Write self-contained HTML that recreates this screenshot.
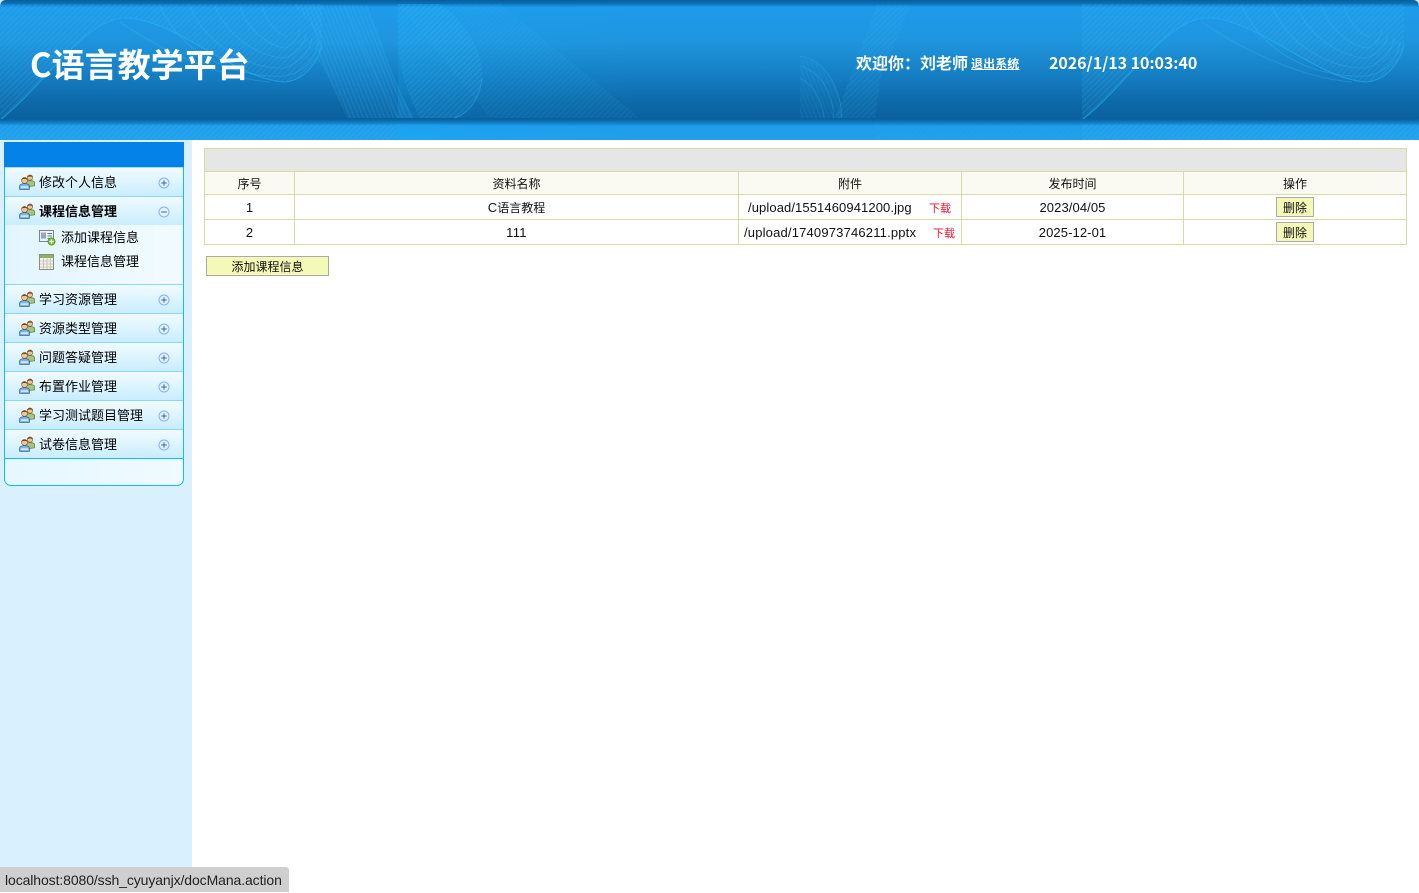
<!DOCTYPE html>
<html lang="zh-CN">
<head>
<meta charset="utf-8">
<title>C语言教学平台</title>
<style>
*{box-sizing:border-box}
html,body{margin:0;padding:0;width:1419px;height:892px;overflow:hidden;background:#fff;font-family:"Liberation Sans","Noto Sans CJK SC",sans-serif;color:#000}
.a{position:absolute}
.t{position:absolute;white-space:nowrap;font-size:13px;line-height:18px}
.hb{font-family:"Noto Sans CJK SC",sans-serif;font-weight:700;color:#fff}
.item{position:absolute;left:5px;width:178px;height:28px;background:linear-gradient(#f1fbff,#c9edff)}
.line{position:absolute;left:5px;width:178px;height:1px;background:#8bd8fb}
.lbl{position:absolute;left:39px;font-size:13px;line-height:18px;white-space:nowrap;color:#000;font-family:"Noto Sans CJK SC",sans-serif}
.cell{position:absolute;font-size:13px;line-height:18px;text-align:center;white-space:nowrap;color:#111}
.h{position:absolute;background:#d5dca6}
.btn{position:absolute;left:1276px;width:38px;height:20px;background:#f4f9b8;border:1px solid #aaa;font-size:12px;line-height:19px;text-align:center;font-family:"Noto Sans CJK SC",sans-serif;color:#111}
</style>
</head>
<body>

<svg class="a" style="left:0;top:0" width="1419" height="140" viewBox="0 0 1419 140">
<defs>
<linearGradient id="bg" x1="0" y1="0" x2="0" y2="1">
<stop offset="0" stop-color="#075d9d"/>
<stop offset=".03" stop-color="#0b70b5"/>
<stop offset=".06" stop-color="#1e9bea"/>
<stop offset=".35" stop-color="#1f95dd"/>
<stop offset=".65" stop-color="#147cc0"/>
<stop offset=".85" stop-color="#0e69a8"/>
<stop offset="1" stop-color="#0a609c"/>
</linearGradient>
<linearGradient id="bot" x1="0" y1="0" x2="0" y2="1">
<stop offset="0" stop-color="#0a5f9c"/>
<stop offset=".15" stop-color="#0f78bc"/>
<stop offset=".35" stop-color="#1f9ceb"/>
<stop offset="1" stop-color="#219fec"/>
</linearGradient>
<linearGradient id="fade" x1="0" y1="0" x2="1" y2="0">
<stop offset="0" stop-color="#16b2fb" stop-opacity=".55"/>
<stop offset=".35" stop-color="#16b2fb" stop-opacity=".22"/>
<stop offset="1" stop-color="#16b2fb" stop-opacity="0"/>
</linearGradient>
<linearGradient id="vfade" x1="0" y1="0" x2="0" y2="1">
<stop offset="0" stop-color="#fff" stop-opacity="1"/>
<stop offset=".7" stop-color="#fff" stop-opacity=".75"/>
<stop offset="1" stop-color="#fff" stop-opacity=".35"/>
</linearGradient>
<pattern id="hatch" width="4" height="4" patternUnits="userSpaceOnUse" patternTransform="rotate(45)">
<rect width="4" height="4" fill="#2fb4f8" fill-opacity=".09"/>
<rect width="1.5" height="4" fill="#4cc4ff" fill-opacity=".13"/>
</pattern>
<pattern id="hatch2" width="4" height="4" patternUnits="userSpaceOnUse" patternTransform="rotate(-22)">
<rect width="4" height="4" fill="#28b0f8" fill-opacity=".12"/>
<rect width="1.5" height="4" fill="#50c8ff" fill-opacity=".12"/>
</pattern>
<g id="tile" fill="none">
<path d="M0 120 C45 85 85 18 125 18 C175 18 235 80 285 82 C305 80 318 62 322 45 L322 4 L0 4Z" fill="url(#hatch)"/>
<path d="M0 120 C45 85 85 18 125 18 C175 18 235 80 285 82 C305 80 318 62 322 45" stroke="#22b6fa" stroke-width="1.1" stroke-opacity=".55"/>
<path d="M160 6 C185 60 240 78 285 76 C305 72 316 58 318 42 M190 6 C205 45 250 70 285 68 C300 62 310 52 312 38 M215 6 C225 35 260 58 285 58 C296 54 304 46 306 34 M240 6 C246 28 268 46 285 48 C294 45 298 38 300 30 M262 6 C266 20 276 34 288 37 M120 22 C160 50 220 78 270 82" stroke="#3fc0fd" stroke-opacity=".28"/>
</g>
<g id="mid" fill="none">
<rect x="398" y="4" width="240" height="114" fill="url(#fade)" opacity=".35"/>
<path d="M293 5 L367 5 C385 55 395 85 413 118 L347 118 C335 90 325 70 318 60 C322 40 310 20 293 5Z" fill="url(#hatch2)"/>
<path d="M398 4 L440 4 C470 25 483 55 482 78 C480 98 470 112 455 118 L420 118 C405 90 395 60 398 4Z" fill="url(#hatch)"/>
<path d="M482 78 C480 98 470 112 455 118" stroke="#22aef5" stroke-opacity=".5"/>
<path d="M367 5 C385 55 395 85 413 118 M345 5 C365 55 380 85 398 118" stroke="#2fb8fb" stroke-opacity=".2"/>
<path d="M398 4 H500 L640 118 H490Z" fill="url(#hatch)" fill-opacity=".5"/>
<path d="M835 118 L877 5 L910 5 L880 80 L875 118Z" fill="url(#hatch)" fill-opacity=".7"/>
<path d="M800 118 H842 C842 90 830 65 800 56Z" fill="url(#hatch2)" fill-opacity=".5"/>
<path d="M800 56 C825 60 840 85 842 118 M800 66 C820 72 832 90 834 118 M800 78 C812 84 822 98 824 118" stroke="#40bffc" stroke-opacity=".22"/>
</g>
<clipPath id="upper"><rect x="0" y="0" width="1419" height="119"/></clipPath>
<clipPath id="lower"><rect x="0" y="124" width="1419" height="16"/></clipPath>
<clipPath id="leftc"><rect x="0" y="0" width="398" height="140"/></clipPath>
<clipPath id="rightc"><rect x="1082" y="0" width="337" height="140"/></clipPath>
</defs>
<rect width="1419" height="140" fill="#219fec"/>
<rect y="0" width="1419" height="120" fill="url(#bg)"/>
<rect y="119" width="1419" height="21" fill="url(#bot)"/>
<g clip-path="url(#upper)">
  <g clip-path="url(#leftc)"><use href="#tile"/></g>
  <use href="#mid"/>
  <g clip-path="url(#rightc)"><use href="#tile" x="1082"/></g>
</g>
<g clip-path="url(#lower)">
  <rect y="124" width="398" height="16" fill="url(#hatch)"/>
  <rect x="398" y="124" width="240" height="16" fill="url(#fade)" opacity=".6"/>
  <rect x="1082" y="124" width="337" height="16" fill="url(#hatch)"/>
  <rect x="875" y="124" width="207" height="16" fill="url(#hatch)" fill-opacity=".4"/>
</g>
<path d="M0 0H6C2 0 0 3 0 7Z" fill="#d7e8f2"/>
<path d="M1419 0H1413C1417 0 1419 3 1419 7Z" fill="#d7e8f2"/>
</svg>

<div class="t hb" style="left:30px;top:39px;font-size:33px;line-height:48px;">C语言教学平台</div>
<div class="t hb" style="left:856px;top:50px;font-size:16px;line-height:24px;">欢迎你：刘老师</div>
<div class="t hb" style="left:971px;top:55px;font-size:12px;line-height:18px;text-decoration:underline;letter-spacing:.1px">退出系统</div>
<div class="t hb" style="left:1049px;top:50px;font-size:16px;line-height:24px;letter-spacing:-.05px">2026/1/13 10:03:40</div>

<!-- sidebar -->
<div class="a" style="left:0;top:140px;width:192px;height:752px;background:#d9f1ff"></div>
<div class="a" style="left:4px;top:142px;width:180px;height:344px;background:linear-gradient(90deg,#e6f7ff,#f0faff);border:1px solid #12bdf5;border-top:0;border-radius:0 0 7px 7px"></div>
<div class="a" style="left:4px;top:142px;width:180px;height:25px;background:#0582e8"></div>

<svg width="0" height="0" style="position:absolute">
<defs>
<g id="ppl">
<circle cx="11" cy="3.6" r="2.7" fill="#ecc79a" stroke="#8a5a2a" stroke-width=".6"/>
<path d="M8.2 3.2C8.4 .5 13.6 .5 13.8 3.2 12 2.2 10 2.2 8.2 3.2Z" fill="#7a4a1c"/>
<path d="M7 12.5V9C7 7 9 6.6 11 6.6S15.7 7 15.7 9V11.8L10 12.5Z" fill="#a9c47c" stroke="#5b7d33" stroke-width=".7"/>
<circle cx="5.5" cy="6.4" r="3" fill="#efc79b" stroke="#8a5a2a" stroke-width=".6"/>
<path d="M2.3 6C2.5 2.8 8.5 2.8 8.7 6 6.6 4.7 4.4 4.7 2.3 6Z" fill="#7a4a1c"/>
<path d="M.6 15.4V12.3C.6 10.3 3 9.7 5.5 9.7S10.4 10.3 10.4 12.3V15.4Z" fill="#7db4e6" stroke="#2b5f9c" stroke-width=".7"/>
<rect x="2" y="12.4" width="7" height="1.4" fill="#e8f4ff"/>
</g>
<g id="plus">
<circle cx="6" cy="6" r="5" fill="#e4f2ff" stroke="#82b4ee" stroke-width="1"/>
<path d="M3.2 6H8.8M6 3.2V8.8" stroke="#2f66c0" stroke-width="1" fill="none"/>
</g>
<g id="minus">
<circle cx="6" cy="6" r="5" fill="#e4f2ff" stroke="#82b4ee" stroke-width="1"/>
<path d="M3.2 6H8.8" stroke="#2f66c0" stroke-width="1" fill="none"/>
</g>
</defs>
</svg>

<!-- menu rows -->
<div class="line" style="top:167px;background:#9be0fb"></div>
<div class="item" style="top:168px"></div>
<div class="line" style="top:196px"></div>
<div class="item" style="top:197px"></div>
<div class="a" style="left:5px;top:225px;width:178px;height:59px;background:linear-gradient(90deg,#e2f5ff,#f2fbff)"></div>
<div class="line" style="top:284px"></div>
<div class="item" style="top:285px"></div>
<div class="line" style="top:313px"></div>
<div class="item" style="top:314px"></div>
<div class="line" style="top:342px"></div>
<div class="item" style="top:343px"></div>
<div class="line" style="top:371px"></div>
<div class="item" style="top:372px"></div>
<div class="line" style="top:400px"></div>
<div class="item" style="top:401px"></div>
<div class="line" style="top:429px"></div>
<div class="item" style="top:430px"></div>
<div class="line" style="top:458px;background:#0dbdf5"></div>

<svg class="a" style="left:19px;top:174px" width="16" height="16"><use href="#ppl"/></svg>
<svg class="a" style="left:19px;top:203px" width="16" height="16"><use href="#ppl"/></svg>
<svg class="a" style="left:19px;top:291px" width="16" height="16"><use href="#ppl"/></svg>
<svg class="a" style="left:19px;top:320px" width="16" height="16"><use href="#ppl"/></svg>
<svg class="a" style="left:19px;top:349px" width="16" height="16"><use href="#ppl"/></svg>
<svg class="a" style="left:19px;top:378px" width="16" height="16"><use href="#ppl"/></svg>
<svg class="a" style="left:19px;top:407px" width="16" height="16"><use href="#ppl"/></svg>
<svg class="a" style="left:19px;top:436px" width="16" height="16"><use href="#ppl"/></svg>

<svg class="a" style="left:157.5px;top:176.5px" width="12" height="12"><use href="#plus"/></svg>
<svg class="a" style="left:157.5px;top:205.5px" width="12" height="12"><use href="#minus"/></svg>
<svg class="a" style="left:157.5px;top:293.5px" width="12" height="12"><use href="#plus"/></svg>
<svg class="a" style="left:157.5px;top:322.5px" width="12" height="12"><use href="#plus"/></svg>
<svg class="a" style="left:157.5px;top:351.5px" width="12" height="12"><use href="#plus"/></svg>
<svg class="a" style="left:157.5px;top:380.5px" width="12" height="12"><use href="#plus"/></svg>
<svg class="a" style="left:157.5px;top:409.5px" width="12" height="12"><use href="#plus"/></svg>
<svg class="a" style="left:157.5px;top:438.5px" width="12" height="12"><use href="#plus"/></svg>

<div class="lbl" style="top:173px">修改个人信息</div>
<div class="lbl" style="top:202px;font-weight:700">课程信息管理</div>
<div class="lbl" style="top:290px">学习资源管理</div>
<div class="lbl" style="top:319px">资源类型管理</div>
<div class="lbl" style="top:348px">问题答疑管理</div>
<div class="lbl" style="top:377px">布置作业管理</div>
<div class="lbl" style="top:406px">学习测试题目管理</div>
<div class="lbl" style="top:435px">试卷信息管理</div>
<div class="lbl" style="top:228px;left:61px">添加课程信息</div>
<div class="lbl" style="top:252px;left:61px">课程信息管理</div>

<svg class="a" style="left:39px;top:230px" width="17" height="16" viewBox="0 0 17 16">
<rect x=".5" y=".5" width="14" height="11" fill="#eef4fb" stroke="#6c87a8"/>
<rect x="2" y="2.5" width="5" height="6" fill="#7ea6d8"/>
<circle cx="4.5" cy="4" r="1.5" fill="#d9a46f"/>
<path d="M8.5 3.5H13M8.5 6H13M8.5 8.5H11" stroke="#5b6f8a"/>
<circle cx="12.5" cy="11.5" r="3.6" fill="#7cc234" stroke="#3f8a16" stroke-width=".7"/>
<path d="M10.5 11.5H14.5M12.5 9.5V13.5" stroke="#fff" stroke-width="1.2"/>
</svg>
<svg class="a" style="left:39px;top:254px" width="15" height="16" viewBox="0 0 15 16">
<rect x=".5" y=".5" width="14" height="15" fill="#f6f4ec" stroke="#8a8f78"/>
<rect x="1" y="1" width="13" height="3" fill="#8fb06a"/>
<path d="M1 7H14M1 10H14M1 13H14M4.5 4V15M8 4V15M11.5 4V15" stroke="#c8c8ba" fill="none"/>
</svg>

<!-- table -->
<div class="a" style="left:205px;top:149px;width:1201px;height:22px;background:#e6e6e6"></div>
<div class="a" style="left:205px;top:172px;width:1201px;height:22px;background:#fafaf2"></div>
<div class="h" style="left:204px;top:148px;width:1203px;height:1px"></div>
<div class="h" style="left:204px;top:171px;width:1203px;height:1px"></div>
<div class="h" style="left:204px;top:194px;width:1203px;height:1px"></div>
<div class="h" style="left:204px;top:219px;width:1203px;height:1px"></div>
<div class="h" style="left:204px;top:244px;width:1203px;height:1px"></div>
<div class="h" style="left:204px;top:148px;width:1px;height:97px"></div>
<div class="h" style="left:1406px;top:148px;width:1px;height:97px"></div>
<div class="h" style="left:294px;top:171px;width:1px;height:74px"></div>
<div class="h" style="left:738px;top:171px;width:1px;height:74px"></div>
<div class="h" style="left:961px;top:171px;width:1px;height:74px"></div>
<div class="h" style="left:1183px;top:171px;width:1px;height:74px"></div>

<div class="cell" style="left:205px;width:89px;top:175px;font-size:12px">序号</div>
<div class="cell" style="left:295px;width:443px;top:175px;font-size:12px">资料名称</div>
<div class="cell" style="left:739px;width:222px;top:175px;font-size:12px">附件</div>
<div class="cell" style="left:962px;width:221px;top:175px;font-size:12px">发布时间</div>
<div class="cell" style="left:1184px;width:222px;top:175px;font-size:12px">操作</div>

<div class="cell" style="left:205px;width:89px;top:199px">1</div>
<div class="cell" style="left:295px;width:443px;top:199px">C<span style="font-size:12px">语言教程</span></div>
<div class="cell" style="left:748px;top:199px;letter-spacing:.1px">/upload/1551460941200.jpg</div>
<div class="cell" style="left:929px;top:200px;font-size:11px;color:#f0102a">下载</div>
<div class="cell" style="left:962px;width:221px;top:199px;letter-spacing:.1px">2023/04/05</div>
<div class="btn" style="top:197px">删除</div>

<div class="cell" style="left:205px;width:89px;top:224px">2</div>
<div class="cell" style="left:295px;width:443px;top:224px;letter-spacing:.3px">111</div>
<div class="cell" style="left:744px;top:224px;letter-spacing:.18px">/upload/1740973746211.pptx</div>
<div class="cell" style="left:933px;top:225px;font-size:11px;color:#f0102a">下载</div>
<div class="cell" style="left:962px;width:221px;top:224px;letter-spacing:.1px">2025-12-01</div>
<div class="btn" style="top:222px">删除</div>

<div class="a" style="left:206px;top:256px;width:123px;height:20px;background:#f4f9b8;border:1px solid #aaa;font-size:12px;line-height:19px;text-align:center;font-family:'Noto Sans CJK SC',sans-serif;color:#111">添加课程信息</div>

<!-- status bar -->
<div class="a" style="left:0;top:867px;width:289px;height:25px;background:#cfcfcf;border-radius:0 3px 0 0;font-size:14px;line-height:26px;padding-left:5px;color:#222;white-space:nowrap;letter-spacing:-.1px">localhost:8080/ssh_cyuyanjx/docMana.action</div>

</body>
</html>
